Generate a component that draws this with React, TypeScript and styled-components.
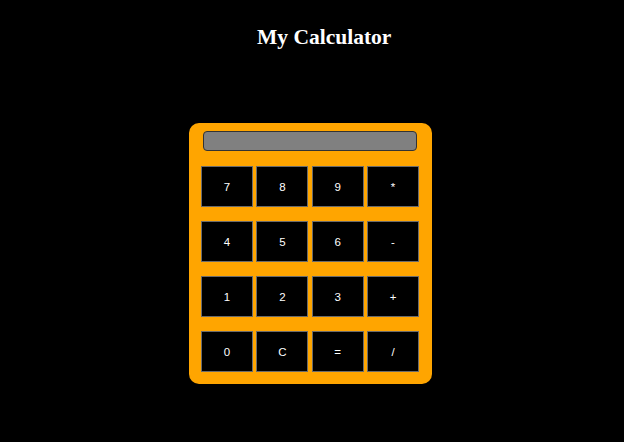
import React from "react";
import styled, { createGlobalStyle } from "styled-components";

const Global = createGlobalStyle`
  html, body { margin: 0; padding: 0; background: #000; }
  body { font-family: "Liberation Serif", "Times New Roman", serif; }
`;

const Page = styled.div`
  width: 624px;
  height: 442px;
  background: #000;
  display: flex;
  flex-direction: column;
  align-items: flex-start;
`;

const Title = styled.h1`
  margin: 0;
  padding: 25px 0 0 257px;
  font-family: "Liberation Serif", "Times New Roman", serif;
  font-weight: bold;
  font-size: 21.5px;
  line-height: 24px;
  color: #fff;
`;

const Calculator = styled.div`
  margin: 74px 0 0 189px;
  width: 243px;
  box-sizing: border-box;
  background: #ffa500;
  border-radius: 10px;
  padding: 8px 13px 12px 12px;
  display: flex;
  flex-direction: column;
`;

const Display = styled.div`
  margin-left: 2px;
  width: 214px;
  height: 20px;
  box-sizing: border-box;
  background: #808080;
  border: 1px solid #333;
  border-radius: 4px;
`;

const Keys = styled.div`
  margin-top: 15px;
  display: grid;
  grid-template-columns: repeat(4, 52px);
  grid-auto-rows: 41px;
  column-gap: 3.33px;
  row-gap: 14px;
`;

const Key = styled.button`
  box-sizing: border-box;
  background: #000;
  color: #fff;
  border: 1px solid #6b6b6b;
  font-family: "Liberation Sans", Arial, sans-serif;
  font-size: 11.5px;
  padding: 0;
  cursor: pointer;
`;

const keys = ["7", "8", "9", "*", "4", "5", "6", "-", "1", "2", "3", "+", "0", "C", "=", "/"];

export default function App() {
  return (
    <>
      <Global />
      <Page>
        <Title>My Calculator</Title>
        <Calculator>
          <Display />
          <Keys>
            {keys.map((k) => (
              <Key key={k}>{k}</Key>
            ))}
          </Keys>
        </Calculator>
      </Page>
    </>
  );
}
